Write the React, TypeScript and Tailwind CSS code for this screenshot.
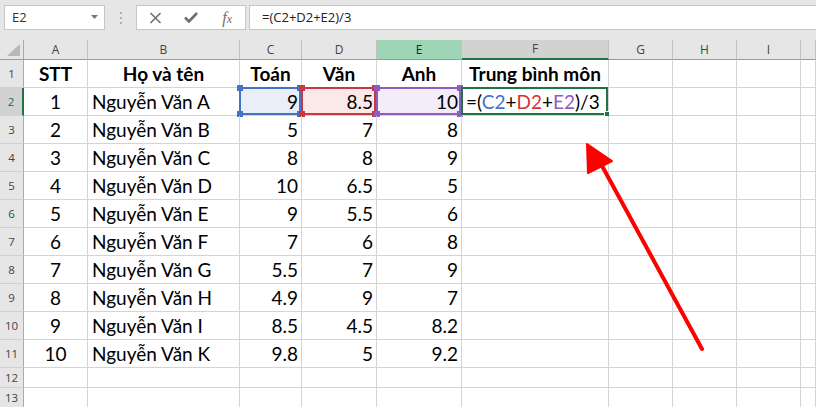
import type { ReactNode } from 'react';

type Sel = 'blue' | 'red' | 'purple' | 'green';

const colLetters = ['A', 'B', 'C', 'D', 'E', 'F', 'G', 'H', 'I', ''];

const data: [string, string, string, string, string][] = [
  ['1', 'Nguyễn Văn A', '9', '8.5', '10'],
  ['2', 'Nguyễn Văn B', '5', '7', '8'],
  ['3', 'Nguyễn Văn C', '8', '8', '9'],
  ['4', 'Nguyễn Văn D', '10', '6.5', '5'],
  ['5', 'Nguyễn Văn E', '9', '5.5', '6'],
  ['6', 'Nguyễn Văn F', '7', '6', '8'],
  ['7', 'Nguyễn Văn G', '5.5', '7', '9'],
  ['8', 'Nguyễn Văn H', '4.9', '9', '7'],
  ['9', 'Nguyễn Văn I', '8.5', '4.5', '8.2'],
  ['10', 'Nguyễn Văn K', '9.8', '5', '9.2'],
];

const selBox: Record<Sel, string> = {
  blue: 'border-[#4472c4] bg-[#e9eef8]',
  red: 'border-[#c8393f] bg-[#fbe9ea]',
  purple: 'border-[#8e5cc1] bg-[#f2edf8]',
  green: 'border-[#217346]',
};

const selCorner: Record<Sel, string> = {
  blue: 'bg-[#4472c4]',
  red: 'bg-[#c8393f]',
  purple: 'bg-[#8e5cc1]',
  green: 'bg-[#217346]',
};

function Cell({
  children,
  align = 'left',
  bold,
  sel,
  h = 'h-[28px]',
}: {
  children?: ReactNode;
  align?: 'left' | 'center' | 'right';
  bold?: boolean;
  sel?: Sel;
  h?: string;
}) {
  const alignCls =
    align === 'center' ? 'justify-center' : align === 'right' ? 'justify-end pr-[3px]' : 'justify-start pl-[4px]';
  return (
    <div className={`relative ${h} border-r border-b border-[#d4d4d4] flex items-end ${alignCls}`}>
      {sel && (
        <div className={`absolute -left-px -top-px right-0 bottom-0 border-2 ${selBox[sel]}`}>
          {sel !== 'green' ? (
            <>
              <span className={`absolute -left-[4px] -top-[4px] w-[6px] h-[6px] ${selCorner[sel]}`} />
              <span className={`absolute -right-[4px] -top-[4px] w-[6px] h-[6px] ${selCorner[sel]}`} />
              <span className={`absolute -left-[4px] -bottom-[4px] w-[6px] h-[6px] ${selCorner[sel]}`} />
              <span className={`absolute -right-[4px] -bottom-[4px] w-[6px] h-[6px] ${selCorner[sel]}`} />
            </>
          ) : (
            <span className="absolute -right-[4px] -bottom-[4px] w-[6px] h-[6px] bg-[#217346] border border-white" />
          )}
        </div>
      )}
      <span
        className={`relative leading-[26px] text-[19px] text-black whitespace-nowrap ${bold ? 'font-bold' : ''}`}
      >
        {children}
      </span>
    </div>
  );
}

function RowHead({ n, active, h = 'h-[28px]' }: { n: number; active?: boolean; h?: string }) {
  return (
    <div
      className={`${h} border-b border-[#d0d0d0] flex items-center justify-center font-['Open_Sans',sans-serif] text-[11.5px] ${
        active
          ? 'bg-[#d2d2d2] text-[#217346] border-r-2 border-r-[#217346]'
          : 'bg-[#e6e6e6] text-[#444] border-r border-r-[#ababab]'
      }`}
    >
      {n}
    </div>
  );
}

function ColHead({ l }: { l: string }) {
  const tone =
    l === 'E'
      ? 'bg-[#9fd5b7] text-[#222] border-b border-b-[#9b9b9b]'
      : l === 'F'
        ? 'bg-[#d2d2d2] text-[#444] border-b-2 border-b-[#217346]'
        : 'bg-[#e6e6e6] text-[#444] border-b border-b-[#9b9b9b]';
  return (
    <div
      className={`h-[20px] border-r border-r-[#c0c0c0] flex items-center justify-center font-['Open_Sans',sans-serif] text-[12px] ${tone}`}
    >
      {l}
    </div>
  );
}

export default function App() {
  return (
    <div className="relative w-[816px] h-[407px] overflow-hidden bg-white font-['Lato',sans-serif]">
      {/* formula bar */}
      <div className="h-[40px] bg-[#e6e6e6] flex items-start pt-[5px] pl-[4px] font-['Open_Sans',sans-serif]">
        <div className="w-[101px] h-[25px] bg-white border border-[#c6c6c6] flex items-center justify-between pl-[7px] pr-[5px]">
          <span className="text-[13px] text-[#333]">E2</span>
          <svg width="8" height="5" viewBox="0 0 8 5">
            <path d="M0 0 H7 L3.5 4 Z" fill="#777" />
          </svg>
        </div>
        <div className="w-[31px] h-[25px] flex items-center justify-center">
          <svg width="4" height="12" viewBox="0 0 4 12">
            <rect x="1" y="0" width="2" height="2" fill="#b0b0b0" />
            <rect x="1" y="5" width="2" height="2" fill="#b0b0b0" />
            <rect x="1" y="10" width="2" height="2" fill="#b0b0b0" />
          </svg>
        </div>
        <div className="w-[110px] h-[25px] bg-white border border-[#c6c6c6] grid grid-cols-3 items-center justify-items-center pl-px">
          <svg width="13" height="12" viewBox="0 0 13 12">
            <path d="M1.5 1 L11.5 11 M11.5 1 L1.5 11" stroke="#6f6f6f" strokeWidth="1.6" />
          </svg>
          <svg width="14" height="11" viewBox="0 0 14 11">
            <path d="M1 5.5 L5 9.5 L13 1" stroke="#6f6f6f" strokeWidth="2.6" fill="none" />
          </svg>
          <span className="font-['Liberation_Serif',serif] italic text-[16px] text-[#6f6f6f] leading-none">
            f<span className="text-[12px]">x</span>
          </span>
        </div>
        <div className="ml-[3px] flex-1 h-[25px] bg-white border border-r-0 border-[#c6c6c6] flex items-center pl-[12px]">
          <span className="text-[13px] text-[#222]">=(C2+D2+E2)/3</span>
        </div>
      </div>

      {/* sheet grid */}
      <div className="grid grid-cols-[24px_64px_152px_62px_75px_85px_147px_64px_64px_64px_1fr]">
        {/* header row */}
        <div className="h-[20px] bg-[#e6e6e6] border-r border-r-[#ababab] border-b border-b-[#9b9b9b] flex items-end justify-end pr-[3px] pb-[3px]">
          <svg width="13" height="12" viewBox="0 0 13 12">
            <path d="M13 0 L13 12 L0 12 Z" fill="#b8b8b8" />
          </svg>
        </div>
        {colLetters.map((l, i) => (
          <ColHead key={i} l={l} />
        ))}

        {/* row 1 */}
        <RowHead n={1} />
        <Cell align="center" bold>STT</Cell>
        <Cell align="center" bold>Họ và tên</Cell>
        <Cell align="center" bold>Toán</Cell>
        <Cell align="center" bold>Văn</Cell>
        <Cell align="center" bold>Anh</Cell>
        <Cell align="center" bold>Trung bình môn</Cell>
        <Cell />
        <Cell />
        <Cell />
        <Cell />

        {data.map((r, i) => (
          <Row key={i} r={r} n={i + 2} />
        ))}

        {[12, 13].map((n) => (
          <SmallRow key={n} n={n} />
        ))}
      </div>

      {/* red arrow */}
      <svg className="absolute left-0 top-0 pointer-events-none" width="816" height="407" viewBox="0 0 816 407">
        <line x1="702" y1="349" x2="601" y2="164" stroke="#ff0000" strokeWidth="4" strokeLinecap="round" />
        <polygon points="587,144 612,161 588,173" fill="#ff0000" stroke="#ff0000" strokeWidth="2" strokeLinejoin="round" />
      </svg>
    </div>
  );
}

function Row({ r, n }: { r: [string, string, string, string, string]; n: number }) {
  const first = n === 2;
  return (
    <>
      <RowHead n={n} active={first} />
      <Cell align="center">{r[0]}</Cell>
      <Cell>{r[1]}</Cell>
      <Cell align="right" sel={first ? 'blue' : undefined}>{r[2]}</Cell>
      <Cell align="right" sel={first ? 'red' : undefined}>{r[3]}</Cell>
      <Cell align="right" sel={first ? 'purple' : undefined}>{r[4]}</Cell>
      <Cell sel={first ? 'green' : undefined}>
        {first && (
          <>
            =(<span className="text-[#4472c4]">C2</span>+<span className="text-[#d13438]">D2</span>+
            <span className="text-[#8e5cc1]">E2</span>)/3
          </>
        )}
      </Cell>
      <Cell />
      <Cell />
      <Cell />
      <Cell />
    </>
  );
}

function SmallRow({ n }: { n: number }) {
  return (
    <>
      <RowHead n={n} h="h-[20px]" />
      {Array.from({ length: 10 }).map((_, i) => (
        <Cell key={i} h="h-[20px]" />
      ))}
    </>
  );
}
